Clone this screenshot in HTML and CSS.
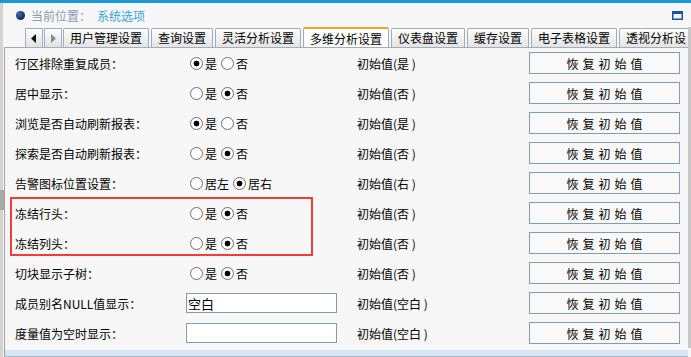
FILE: index.html
```html
<!DOCTYPE html>
<html lang="zh-CN">
<head>
    <meta charset="UTF-8">
    <title>系统选项</title>
    <link rel="stylesheet" href="styles.css">
</head>
<body>
    <div class="topbar"></div>
    <div class="frame">
        <div class="side-strip">
            <span class="collapse-handle"></span>
        </div>
        <div class="main">
            <div class="location">
                <span class="dot"></span>
                <span class="loc-label">当前位置：</span>
                <span class="loc-value">系统选项</span>
                <svg class="win-icon" width="11" height="9" viewBox="0 0 11 9">
                    <rect x="0.75" y="0.75" width="9.5" height="7.5" fill="none" stroke="#1c4fa8" stroke-width="1.5"/>
                    <rect x="0" y="0" width="11" height="3" fill="#1c4fa8"/>
                </svg>
            </div>
            <div class="work">
                <div class="work-left">
                    <div class="tabs">
                        <span class="tab-nav">
                            <svg width="6" height="9" viewBox="0 0 6 9"><path d="M5 0 L0 4.5 L5 9 Z" fill="#111"/></svg>
                        </span>
                        <span class="tab-nav">
                            <svg width="6" height="9" viewBox="0 0 6 9"><path d="M1 0 L6 4.5 L1 9 Z" fill="#8a8a8a"/></svg>
                        </span>
                        <span class="tab">用户管理设置</span>
                        <span class="tab">查询设置</span>
                        <span class="tab">灵活分析设置</span>
                        <span class="tab active">多维分析设置</span>
                        <span class="tab">仪表盘设置</span>
                        <span class="tab">缓存设置</span>
                        <span class="tab">电子表格设置</span>
                        <span class="tab last">透视分析设</span>
                    </div>
                    <div class="panel">
                        <div class="row">
                            <span class="label">行区排除重复成员：</span>
                            <span class="choices">
                                <label class="choice"><input type="radio" name="r1" checked>是</label>
                                <label class="choice"><input type="radio" name="r1">否</label>
                            </span>
                            <span class="initial">初始值(是 )</span>
                            <button class="reset-btn">恢复初始值</button>
                        </div>
                        <div class="row">
                            <span class="label">居中显示：</span>
                            <span class="choices">
                                <label class="choice"><input type="radio" name="r2">是</label>
                                <label class="choice"><input type="radio" name="r2" checked>否</label>
                            </span>
                            <span class="initial">初始值(否 )</span>
                            <button class="reset-btn">恢复初始值</button>
                        </div>
                        <div class="row">
                            <span class="label">浏览是否自动刷新报表：</span>
                            <span class="choices">
                                <label class="choice"><input type="radio" name="r3" checked>是</label>
                                <label class="choice"><input type="radio" name="r3">否</label>
                            </span>
                            <span class="initial">初始值(是 )</span>
                            <button class="reset-btn">恢复初始值</button>
                        </div>
                        <div class="row">
                            <span class="label">探索是否自动刷新报表：</span>
                            <span class="choices">
                                <label class="choice"><input type="radio" name="r4">是</label>
                                <label class="choice"><input type="radio" name="r4" checked>否</label>
                            </span>
                            <span class="initial">初始值(否 )</span>
                            <button class="reset-btn">恢复初始值</button>
                        </div>
                        <div class="row">
                            <span class="label">告警图标位置设置：</span>
                            <span class="choices">
                                <label class="choice"><input type="radio" name="r5">居左</label>
                                <label class="choice"><input type="radio" name="r5" checked>居右</label>
                            </span>
                            <span class="initial">初始值(右 )</span>
                            <button class="reset-btn">恢复初始值</button>
                        </div>
                        <div class="highlight">
                            <div class="row">
                                <span class="label">冻结行头：</span>
                                <span class="choices">
                                    <label class="choice"><input type="radio" name="r6">是</label>
                                    <label class="choice"><input type="radio" name="r6" checked>否</label>
                                </span>
                                <span class="initial">初始值(否 )</span>
                                <button class="reset-btn">恢复初始值</button>
                            </div>
                            <div class="row">
                                <span class="label">冻结列头：</span>
                                <span class="choices">
                                    <label class="choice"><input type="radio" name="r7">是</label>
                                    <label class="choice"><input type="radio" name="r7" checked>否</label>
                                </span>
                                <span class="initial">初始值(否 )</span>
                                <button class="reset-btn">恢复初始值</button>
                            </div>
                        </div>
                        <div class="row">
                            <span class="label">切块显示子树：</span>
                            <span class="choices">
                                <label class="choice"><input type="radio" name="r8">是</label>
                                <label class="choice"><input type="radio" name="r8" checked>否</label>
                            </span>
                            <span class="initial">初始值(否 )</span>
                            <button class="reset-btn">恢复初始值</button>
                        </div>
                        <div class="row">
                            <span class="label">成员别名NULL值显示：</span>
                            <input type="text" class="text-input" value="空白">
                            <span class="initial">初始值(空白 )</span>
                            <button class="reset-btn">恢复初始值</button>
                        </div>
                        <div class="row">
                            <span class="label">度量值为空时显示：</span>
                            <input type="text" class="text-input" value="">
                            <span class="initial">初始值(空白 )</span>
                            <button class="reset-btn">恢复初始值</button>
                        </div>
                    </div>
                    <div class="panel-foot"></div>
                </div>
                <div class="scrollbar"></div>
            </div>
        </div>
    </div>
</body>
</html>
```

FILE: styles.css
```css
body {
    margin: 0;
    padding: 0;
    background-color: #f7f7f7;
    font-family: "Noto Sans CJK SC", "Liberation Sans", sans-serif;
    font-size: 12px;
    color: #000000;
    overflow: hidden;
}
.topbar {
    height: 3px;
    background-color: #1a98d6;
}
.frame {
    display: flex;
    height: 354px;
}
.side-strip {
    width: 3px;
    background-color: #d6d3ce;
    display: flex;
    flex-direction: column;
}
.collapse-handle {
    margin-top: 187px;
    width: 4px;
    height: 20px;
    background-color: #a9a9a9;
}
.main {
    flex: 1;
    display: flex;
    flex-direction: column;
    min-width: 0;
}
.location {
    height: 24px;
    display: flex;
    align-items: center;
    padding-left: 13px;
    padding-right: 8px;
}
.dot {
    width: 9px;
    height: 9px;
    border-radius: 50%;
    background: radial-gradient(circle at 35% 35%, #4a64a0, #172c5c 70%);
    margin-right: 6px;
}
.loc-label {
    color: #8b9bb4;
}
.loc-value {
    color: #3aa4dc;
    margin-left: 6px;
}
.win-icon {
    margin-left: auto;
}
.work {
    flex: 1;
    display: flex;
    min-height: 0;
}
.work-left {
    flex: 1;
    display: flex;
    flex-direction: column;
    min-width: 0;
}
.scrollbar {
    width: 3px;
    background-color: #c8c8c8;
    margin-bottom: 9px;
}
.tabs {
    height: 20px;
    display: flex;
    align-items: flex-end;
    gap: 2px;
    padding-left: 22px;
    overflow: hidden;
    white-space: nowrap;
}
.tab-nav {
    width: 16px;
    height: 18px;
    flex: none;
    display: flex;
    align-items: center;
    justify-content: center;
    border: 1px solid #9eaebf;
    border-bottom: none;
    background: linear-gradient(#fdfdfd, #e2e2e2);
    margin-right: -1px;
}
.tab {
    flex: none;
    height: 18px;
    line-height: 18px;
    padding: 0 6px;
    border: 1px solid #9eaebf;
    border-bottom: none;
    border-radius: 2px 2px 0 0;
    background: linear-gradient(#fdfdfd, #e4e4e4);
}
.tab.last {
    padding-right: 12px;
}
.tab.active {
    height: 19px;
    line-height: 20px;
    border-top: 2px solid #f3a52a;
    background: #ffffff;
    margin-bottom: -1px;
    position: relative;
    z-index: 1;
}
.panel {
    margin-left: 1px;
    border-top: 1px solid #9eaebf;
    border-left: 1px solid #a0a0a0;
    padding-left: 10px;
    padding-bottom: 2px;
}
.row {
    height: 30px;
    display: grid;
    grid-template-columns: 171px 171px 172px 151px;
    align-items: center;
}
.choices {
    display: flex;
    align-items: center;
    gap: 4px;
    margin-left: 4px;
}
.choice {
    display: flex;
    align-items: center;
    gap: 2px;
}
.choice input {
    appearance: none;
    -webkit-appearance: none;
    width: 13px;
    height: 13px;
    margin: 0;
    border: 1px solid #6e6e6e;
    border-radius: 50%;
    background-color: #ffffff;
    box-sizing: border-box;
}
.choice input:checked {
    background: radial-gradient(circle, #000000 0, #000000 2.6px, #ffffff 3.2px);
}
.text-input {
    width: 151px;
    height: 20px;
    box-sizing: border-box;
    border: 1px solid #7f9db9;
    background-color: #ffffff;
    font-family: inherit;
    font-size: 13px;
    padding: 0 1px;
    margin: 0;
}
.reset-btn {
    width: 151px;
    height: 22px;
    box-sizing: border-box;
    border: 1px solid #7f9db9;
    background-color: #f9f9f9;
    font-family: inherit;
    font-size: 12px;
    letter-spacing: 4px;
    padding: 0 0 0 4px;
    margin: 0;
    color: #000000;
}
.highlight {
    position: relative;
}
.highlight::after {
    content: "";
    position: absolute;
    left: -5px;
    top: -1px;
    width: 303px;
    height: 59px;
    border: 2px solid #f23b3b;
    box-sizing: border-box;
}
.panel-foot {
    height: 6px;
    margin-left: 1px;
    border-left: 1px solid #a0a0a0;
    background-color: #d8e6f4;
    border-bottom: 1px solid #a8b8c8;
}
```
